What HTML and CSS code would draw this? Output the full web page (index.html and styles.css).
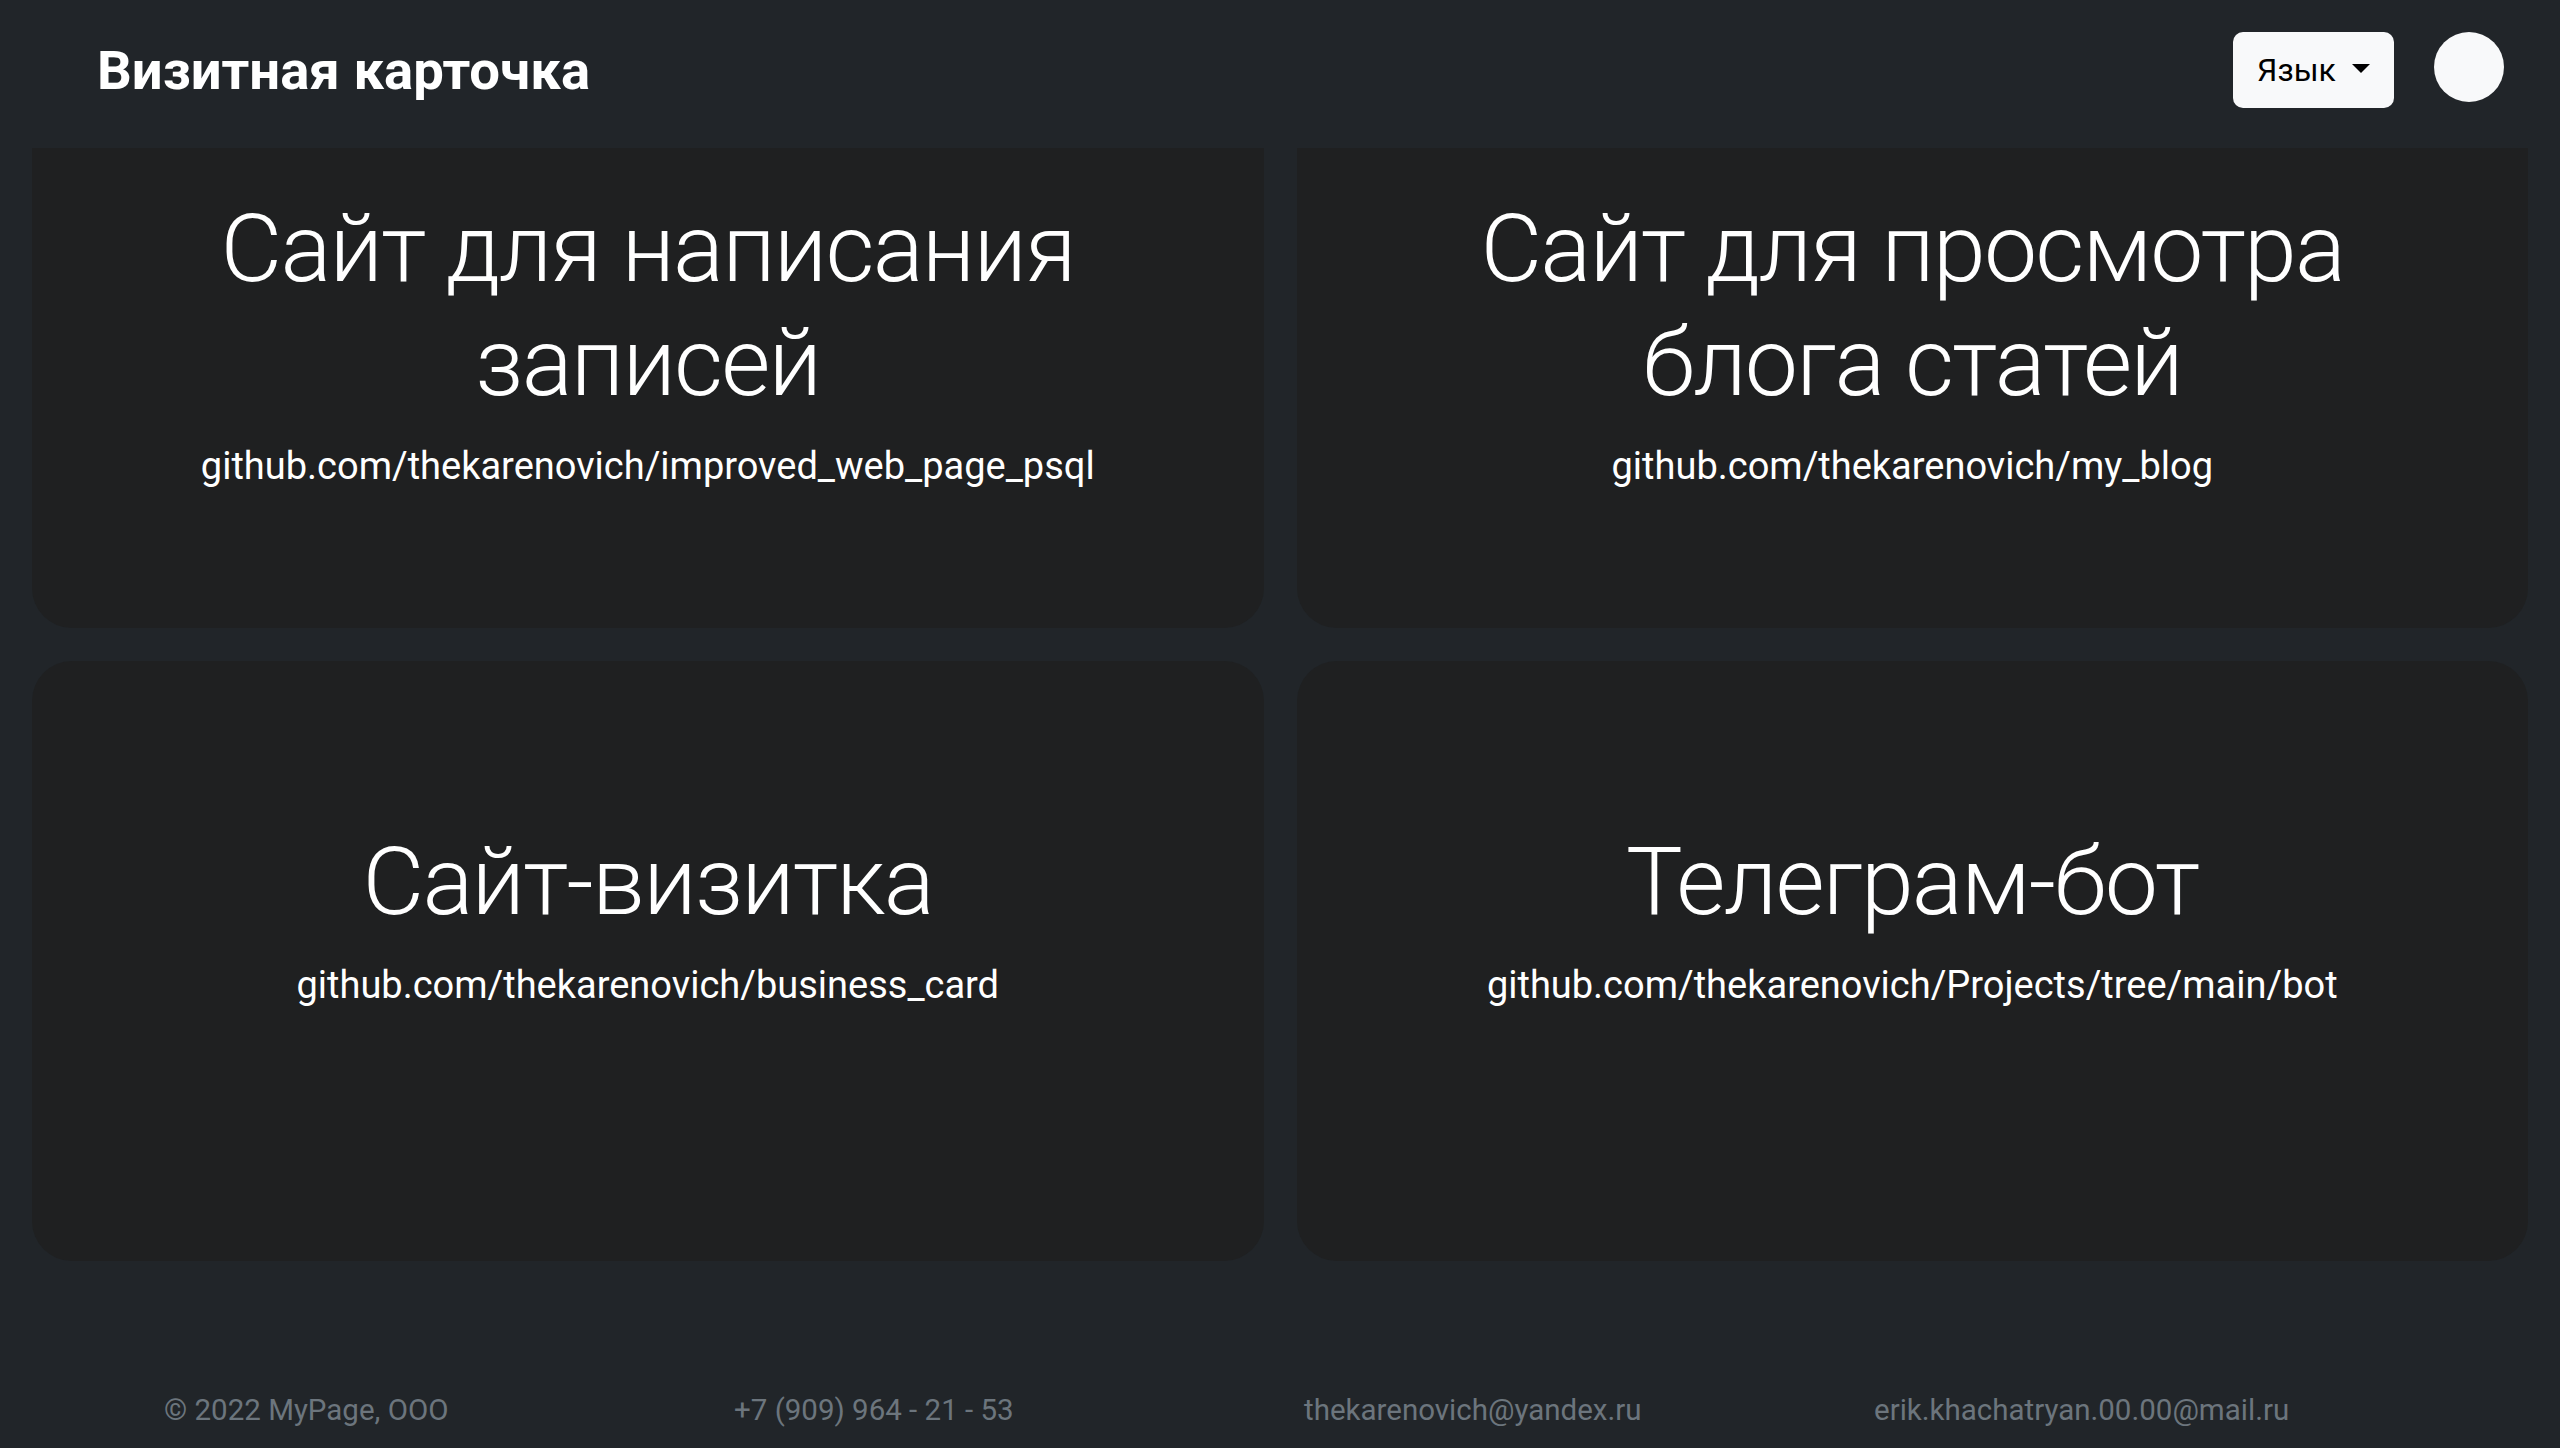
FILE: index.html
```html
<!DOCTYPE html>
<html lang="ru">
<head>
<meta charset="utf-8">
<title>Визитная карточка</title>
<link rel="stylesheet" href="styles.css">
</head>
<body>
<header class="topbar">
  <a class="brand" href="#">Визитная карточка</a>
  <div class="topbar-actions">
    <button class="lang-btn" type="button">Язык <span class="caret"></span></button>
    <span class="avatar"></span>
  </div>
</header>
<main class="projects">
  <section class="card">
    <h2 class="card-title">Сайт для написания<br>записей</h2>
    <a class="card-link" href="#">github.com/thekarenovich/improved_web_page_psql</a>
  </section>
  <section class="card">
    <h2 class="card-title">Сайт для просмотра<br>блога статей</h2>
    <a class="card-link" href="#">github.com/thekarenovich/my_blog</a>
  </section>
  <section class="card">
    <h2 class="card-title">Сайт-визитка</h2>
    <a class="card-link" href="#">github.com/thekarenovich/business_card</a>
  </section>
  <section class="card">
    <h2 class="card-title">Телеграм-бот</h2>
    <a class="card-link" href="#">github.com/thekarenovich/Projects/tree/main/bot</a>
  </section>
</main>
<footer class="footer">
  <span class="footer-item">© 2022 MyPage, ООО</span>
  <span class="footer-item">+7 (909) 964 - 21 - 53</span>
  <span class="footer-item">thekarenovich@yandex.ru</span>
  <span class="footer-item">erik.khachatryan.00.00@mail.ru</span>
</footer>
</body>
</html>
```
FILE: styles.css
```css
* { box-sizing: border-box; }
html, body { margin: 0; padding: 0; }
body {
  background: #212529;
  color: #fff;
  font-family: Roboto, "Liberation Sans", sans-serif;
  height: 1448px;
  overflow: hidden;
}
.topbar {
  position: fixed;
  top: 0; left: 0; right: 0;
  height: 148px;
  background: #212529;
  display: flex;
  align-items: center;
  justify-content: space-between;
  padding: 0 56px 0 97px;
  z-index: 10;
}
.brand {
  color: #fff;
  text-decoration: none;
  font-weight: 700;
  font-size: 54.5px;
  line-height: 1;
  margin-top: -8px;
}
.topbar-actions {
  align-self: flex-start;
  margin-top: 32px;
  display: flex;
  align-items: flex-start;
  gap: 40px;
}
.lang-btn {
  width: 161px;
  height: 76px;
  background: #f8f9fa;
  border: 0;
  border-radius: 10px;
  color: #000;
  font-family: Roboto, "Liberation Sans", sans-serif;
  font-size: 32px;
  display: flex;
  align-items: center;
  justify-content: center;
  gap: 16px;
  padding: 0;
}
.caret {
  width: 0; height: 0;
  border-left: 9px solid transparent;
  border-right: 9px solid transparent;
  border-top: 9px solid #000;
  margin-top: -4px;
}
.avatar {
  width: 70px; height: 70px;
  border-radius: 50%;
  background: #f8f9fa;
  display: block;
}
.projects {
  padding: 28px 32px 0;
  display: grid;
  grid-template-columns: 1fr 1fr;
  gap: 33px;
}
.card {
  height: 600px;
  background: #1f2021;
  border-radius: 40px;
  padding-top: 164px;
  text-align: center;
}
.card-title {
  margin: 0;
  font-weight: 300;
  font-size: 95px;
  line-height: 1.2;
  letter-spacing: -1.8px;
}
.card-link {
  display: block;
  margin-top: 18px;
  color: #fff;
  text-decoration: none;
  font-size: 38px;
  line-height: 1.5;
}
.footer {
  height: 187px;
  padding: 127px 0 0 164px;
  display: grid;
  grid-template-columns: repeat(4, 570px);
  color: #6c757d;
  font-size: 29.5px;
  line-height: 1.5;
}
```
